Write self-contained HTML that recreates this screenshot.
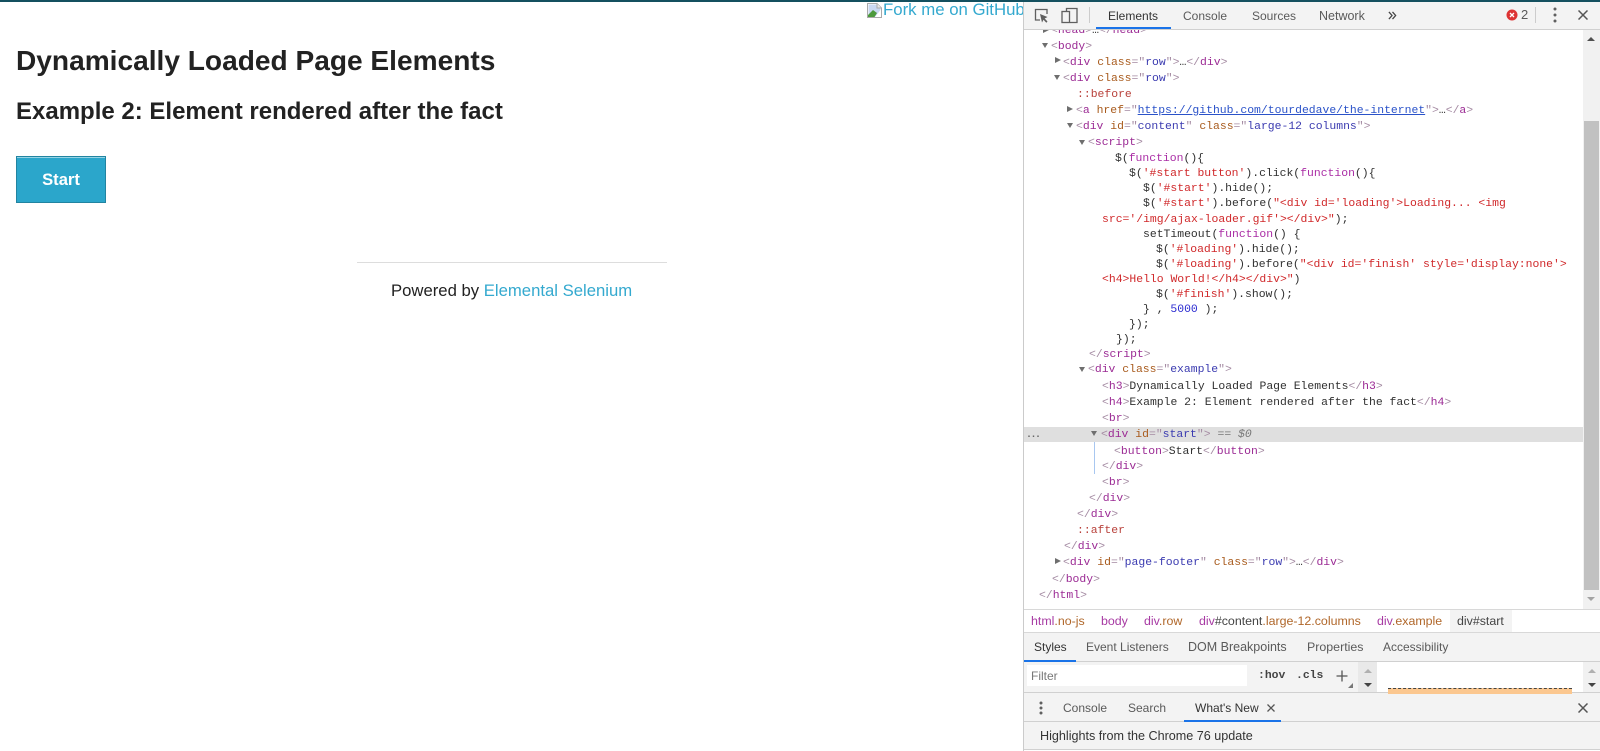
<!DOCTYPE html>
<html lang="en">
<head>
<meta charset="utf-8">
<title>Dynamically Loaded Page Elements</title>
<style>
html,body{margin:0;padding:0;width:1600px;height:751px;overflow:hidden;background:#fff;font-family:"Liberation Sans",sans-serif;}
body{filter:blur(.3px);}
.a{position:absolute;white-space:nowrap;}
#top{position:absolute;left:0;top:0;width:1600px;height:2px;background:#14505f;z-index:9;}
a{color:#34a9cf;text-decoration:none;}
#fork{position:absolute;left:0;top:0;width:1023px;height:30px;overflow:hidden;}
#tree{position:absolute;left:0;top:0;width:1600px;height:609px;font-family:"Liberation Mono",monospace;font-size:11.42px;line-height:16px;color:#303030;overflow:hidden;}
#tree div.l{position:absolute;white-space:pre;}
.t{color:#9b2a94}.b{color:#a58ba3}.n{color:#a85a1c}.v{color:#3a3ab0}.s{color:#d0282a}.k{color:#aa2da5}.p{color:#b8403a}.m{color:#2a2ad0}.g{color:#444}
.d,.r{position:absolute;width:0;height:0;}
.d{border-left:3.5px solid transparent;border-right:3.5px solid transparent;border-top:5.5px solid #6e6e6e;}
.r{border-top:3.5px solid transparent;border-bottom:3.5px solid transparent;border-left:6px solid #6e6e6e;}
.tab{position:absolute;white-space:nowrap;font-size:12px;color:#5a5a5a;line-height:14px;}
.br{position:absolute;white-space:pre;font-size:12.4px;line-height:14px;top:614px;}
.bt{color:#a73aa3}.bc{color:#b0672a}
.gbar{position:absolute;background:#f3f3f3;}
.ln{position:absolute;background:#d0d0d0;}
</style>
</head>
<body>
<div id="top"></div>

<div class="a" style="left:16px;top:44px;font-size:28.1px;line-height:34px;font-weight:bold;color:#222;">Dynamically Loaded Page Elements</div>
<div class="a" style="left:16px;top:98px;font-size:24px;line-height:28px;font-weight:bold;color:#222;">Example 2: Element rendered after the fact</div>
<div class="a" style="left:16px;top:156px;width:90px;height:47px;box-sizing:border-box;background:#2ba6cb;border:1px solid #2284a1;box-shadow:inset 0 1px 0 rgba(255,255,255,.5);color:#fff;font-weight:bold;font-size:16.6px;line-height:45px;text-align:center;">Start</div>

<div class="a" style="left:357px;top:262px;width:310px;height:1px;background:#ddd;"></div>
<div class="a" style="left:391px;top:281px;font-size:16.7px;line-height:20px;color:#222;">Powered by <a>Elemental Selenium</a></div>

<div id="fork">
<svg class="a" style="left:866px;top:2px;" width="17" height="17" viewBox="0 0 17 17"><path d="M1.500 1.500H11L15.500 6V15.500H1.500Z" fill="#fff" stroke="#a9a9a9"/><path d="M11 1.500V6H15.500" fill="#e8e8e8" stroke="#a9a9a9"/><path d="M2.500 2.500H10.500V6.500H14.500V8L9 15H2.500Z" fill="#c9d8f2"/><path d="M2 15V13L7 8L11 11L8.500 15Z" fill="#4c9a3c"/></svg>
<a class="a" style="left:883px;top:0;font-size:16.8px;line-height:19px;">Fork me on GitHub</a>
</div>

<div id="tree">
<div class="l" style="left:1051px;top:23px;"><span class="b">&lt;</span><span class="t">head</span><span class="b">&gt;</span>…<span class="b">&lt;/</span><span class="t">head</span><span class="b">&gt;</span></div>
<span class="r" style="left:1043px;top:27px;"></span>
<span class="d" style="left:1042px;top:43px;"></span>
<div class="l" style="left:1051px;top:39px;"><span class="b">&lt;</span><span class="t">body</span><span class="b">&gt;</span></div>
<span class="r" style="left:1055px;top:57px;"></span>
<div class="l" style="left:1063px;top:55px;"><span class="b">&lt;</span><span class="t">div</span> <span class="n">class</span><span class="b">="</span><span class="v">row</span><span class="b">"&gt;</span>…<span class="b">&lt;/</span><span class="t">div</span><span class="b">&gt;</span></div>
<span class="d" style="left:1054px;top:75px;"></span>
<div class="l" style="left:1063px;top:71px;"><span class="b">&lt;</span><span class="t">div</span> <span class="n">class</span><span class="b">="</span><span class="v">row</span><span class="b">"&gt;</span></div>
<div class="l p" style="left:1077px;top:87px;">::before</div>
<span class="r" style="left:1067px;top:106px;"></span>
<div class="l" style="left:1076px;top:103px;"><span class="b">&lt;</span><span class="t">a</span> <span class="n">href</span><span class="b">="</span><span style="color:#2a52c9;text-decoration:underline;">https://github.com/tourdedave/the-internet</span><span class="b">"&gt;</span>…<span class="b">&lt;/</span><span class="t">a</span><span class="b">&gt;</span></div>
<span class="d" style="left:1067px;top:123px;"></span>
<div class="l" style="left:1076px;top:119px;"><span class="b">&lt;</span><span class="t">div</span> <span class="n">id</span><span class="b">="</span><span class="v">content</span><span class="b">"</span> <span class="n">class</span><span class="b">="</span><span class="v">large-12 columns</span><span class="b">"&gt;</span></div>
<span class="d" style="left:1079px;top:140px;"></span>
<div class="l" style="left:1088px;top:135px;"><span class="b">&lt;</span><span class="t">script</span><span class="b">&gt;</span></div>
<div class="l" style="left:1115px;top:151px;">$(<span class="k">function</span>(){</div>
<div class="l" style="left:1129px;top:166px;">$(<span class="s">'#start button'</span>).click(<span class="k">function</span>(){</div>
<div class="l" style="left:1143px;top:181px;">$(<span class="s">'#start'</span>).hide();</div>
<div class="l" style="left:1143px;top:196px;">$(<span class="s">'#start'</span>).before(<span class="s">"&lt;div id='loading'&gt;Loading... &lt;img</span></div>
<div class="l" style="left:1102px;top:212px;"><span class="s">src='/img/ajax-loader.gif'&gt;&lt;/div&gt;"</span>);</div>
<div class="l" style="left:1143px;top:227px;">setTimeout(<span class="k">function</span>() {</div>
<div class="l" style="left:1156px;top:242px;">$(<span class="s">'#loading'</span>).hide();</div>
<div class="l" style="left:1156px;top:257px;">$(<span class="s">'#loading'</span>).before(<span class="s">"&lt;div id='finish' style='display:none'&gt;</span></div>
<div class="l" style="left:1102px;top:272px;"><span class="s">&lt;h4&gt;Hello World!&lt;/h4&gt;&lt;/div&gt;"</span>)</div>
<div class="l" style="left:1156px;top:287px;">$(<span class="s">'#finish'</span>).show();</div>
<div class="l" style="left:1143px;top:302px;">} , <span class="m">5000</span> );</div>
<div class="l" style="left:1129px;top:317px;">});</div>
<div class="l" style="left:1116px;top:332px;">});</div>
<div class="l" style="left:1089px;top:347px;"><span class="b">&lt;/</span><span class="t">script</span><span class="b">&gt;</span></div>
<span class="d" style="left:1079px;top:367px;"></span>
<div class="l" style="left:1088px;top:362px;"><span class="b">&lt;</span><span class="t">div</span> <span class="n">class</span><span class="b">="</span><span class="v">example</span><span class="b">"&gt;</span></div>
<div class="l" style="left:1102px;top:379px;"><span class="b">&lt;</span><span class="t">h3</span><span class="b">&gt;</span>Dynamically Loaded Page Elements<span class="b">&lt;/</span><span class="t">h3</span><span class="b">&gt;</span></div>
<div class="l" style="left:1102px;top:395px;"><span class="b">&lt;</span><span class="t">h4</span><span class="b">&gt;</span>Example 2: Element rendered after the fact<span class="b">&lt;/</span><span class="t">h4</span><span class="b">&gt;</span></div>
<div class="l" style="left:1102px;top:411px;"><span class="b">&lt;</span><span class="t">br</span><span class="b">&gt;</span></div>
<div class="a" style="left:1024px;top:427px;width:559px;height:15px;background:#dfdfdf;"></div>
<div class="l" style="left:1026px;top:428px;color:#666;font-weight:bold;font-size:10px;letter-spacing:-1.5px;">...</div>
<span class="d" style="left:1091px;top:431px;"></span>
<div class="l" style="left:1101px;top:427px;"><span class="b">&lt;</span><span class="t">div</span> <span class="n">id</span><span class="b">="</span><span class="v">start</span><span class="b">"&gt;</span> <span style="color:#777;">== <i>$0</i></span></div>
<div class="a" style="left:1094px;top:442px;width:1px;height:32px;background:#a8c7f0;"></div>
<div class="l" style="left:1114px;top:444px;"><span class="b">&lt;</span><span class="t">button</span><span class="b">&gt;</span>Start<span class="b">&lt;/</span><span class="t">button</span><span class="b">&gt;</span></div>
<div class="l" style="left:1102px;top:459px;"><span class="b">&lt;/</span><span class="t">div</span><span class="b">&gt;</span></div>
<div class="l" style="left:1102px;top:475px;"><span class="b">&lt;</span><span class="t">br</span><span class="b">&gt;</span></div>
<div class="l" style="left:1089px;top:491px;"><span class="b">&lt;/</span><span class="t">div</span><span class="b">&gt;</span></div>
<div class="l" style="left:1077px;top:507px;"><span class="b">&lt;/</span><span class="t">div</span><span class="b">&gt;</span></div>
<div class="l p" style="left:1077px;top:523px;">::after</div>
<div class="l" style="left:1064px;top:539px;"><span class="b">&lt;/</span><span class="t">div</span><span class="b">&gt;</span></div>
<span class="r" style="left:1055px;top:558px;"></span>
<div class="l" style="left:1063px;top:555px;"><span class="b">&lt;</span><span class="t">div</span> <span class="n">id</span><span class="b">="</span><span class="v">page-footer</span><span class="b">"</span> <span class="n">class</span><span class="b">="</span><span class="v">row</span><span class="b">"&gt;</span>…<span class="b">&lt;/</span><span class="t">div</span><span class="b">&gt;</span></div>
<div class="l" style="left:1052px;top:572px;"><span class="b">&lt;/</span><span class="t">body</span><span class="b">&gt;</span></div>
<div class="l" style="left:1039px;top:588px;"><span class="b">&lt;/</span><span class="t">html</span><span class="b">&gt;</span></div>
</div>

<!-- tree scrollbar -->
<div class="a" style="left:1583px;top:30px;width:17px;height:579px;background:#f1f1f1;"></div>
<div class="a" style="left:1584px;top:121px;width:15px;height:469px;background:#c1c1c1;"></div>
<div class="a" style="left:1587px;top:37px;width:0;height:0;border-left:4px solid transparent;border-right:4px solid transparent;border-bottom:4px solid #505050;"></div>
<div class="a" style="left:1587px;top:597px;width:0;height:0;border-left:4px solid transparent;border-right:4px solid transparent;border-top:4px solid #a3a3a3;"></div>

<!-- toolbar -->
<div class="gbar" style="left:1024px;top:2px;width:576px;height:27px;"></div>
<div class="ln" style="left:1024px;top:29px;width:576px;height:1px;"></div>
<div class="a" style="left:1023px;top:2px;width:1px;height:749px;background:#cbcbcb;"></div>
<svg class="a" style="left:1032px;top:6px;" width="18" height="18" viewBox="0 0 18 18"><path d="M8 14H3.500V3.500H15V8" fill="none" stroke="#5f5f5f" stroke-width="1.300"/><path d="M8 8L15.500 11L12.700 12.500L15.500 15.500L14.300 16.700L11.500 13.700L10 16.500Z" fill="#5f5f5f"/></svg>
<svg class="a" style="left:1060px;top:6px;" width="19" height="18" viewBox="0 0 19 18"><path d="M6.500 5V2.500H17V16.500H10" fill="none" stroke="#5f5f5f" stroke-width="1.300"/><rect x="2" y="5.500" width="7.500" height="11" fill="none" stroke="#5f5f5f" stroke-width="1.300"/></svg>
<div class="a" style="left:1089px;top:7px;width:1px;height:16px;background:#ccc;"></div>
<div class="tab" style="left:1108px;top:9px;color:#333;">Elements</div>
<div class="a" style="left:1096px;top:27px;width:75px;height:2px;background:#1a73e8;"></div>
<div class="tab" style="left:1183px;top:9px;">Console</div>
<div class="tab" style="left:1252px;top:9px;">Sources</div>
<div class="tab" style="left:1319px;top:9px;font-size:12.5px;">Network</div>
<svg class="a" style="left:1388px;top:11px;" width="9" height="9" viewBox="0 0 10 10"><path d="M1 1L4.500 5L1 9M5 1L8.500 5L5 9" fill="none" stroke="#444" stroke-width="1.400"/></svg>
<svg class="a" style="left:1506px;top:9px;" width="12" height="12" viewBox="0 0 12 12"><circle cx="6" cy="6" r="5.500" fill="#dd3333"/><path d="M4 4L8 8M8 4L4 8" stroke="#fff" stroke-width="1.300"/></svg>
<div class="tab" style="left:1521px;top:8px;font-size:13px;">2</div>
<div class="a" style="left:1535px;top:7px;width:1px;height:16px;background:#ccc;"></div>
<svg class="a" style="left:1553px;top:7px;" width="4" height="16" viewBox="0 0 4 16"><circle cx="2" cy="2" r="1.500" fill="#5f5f5f"/><circle cx="2" cy="8" r="1.500" fill="#5f5f5f"/><circle cx="2" cy="14" r="1.500" fill="#5f5f5f"/></svg>
<svg class="a" style="left:1578px;top:10px;" width="10" height="10" viewBox="0 0 10 10"><path d="M0.500 0.500L9.500 9.500M9.500 0.500L0.500 9.500" stroke="#555" stroke-width="1.500"/></svg>

<!-- breadcrumbs -->
<div class="a" style="left:1024px;top:609px;width:576px;height:24px;background:#fff;border-top:1px solid #d8d8d8;border-bottom:1px solid #d8d8d8;box-sizing:border-box;"></div>
<div class="a" style="left:1450px;top:610px;width:62px;height:22px;background:#f3f3f3;"></div>
<div class="br" style="left:1031px;"><span class="bt">html</span><span class="bc">.no-js</span></div>
<div class="br" style="left:1101px;"><span class="bt">body</span></div>
<div class="br" style="left:1144px;"><span class="bt">div</span><span class="bc">.row</span></div>
<div class="br" style="left:1199px;"><span class="bt">div</span><span style="color:#444;">#content</span><span class="bc">.large-12.columns</span></div>
<div class="br" style="left:1377px;"><span class="bt">div</span><span class="bc">.example</span></div>
<div class="br" style="left:1457px;color:#444;">div#start</div>

<!-- styles tabs -->
<div class="gbar" style="left:1024px;top:633px;width:576px;height:28px;"></div>
<div class="ln" style="left:1024px;top:661px;width:576px;height:1px;"></div>
<div class="tab" style="left:1034px;top:640px;color:#333;">Styles</div>
<div class="a" style="left:1024px;top:660px;width:52px;height:2px;background:#1a73e8;"></div>
<div class="tab" style="left:1086px;top:640px;">Event Listeners</div>
<div class="tab" style="left:1188px;top:640px;font-size:12.5px;">DOM Breakpoints</div>
<div class="tab" style="left:1307px;top:640px;font-size:12.4px;">Properties</div>
<div class="tab" style="left:1383px;top:640px;">Accessibility</div>

<!-- filter row -->
<div class="gbar" style="left:1024px;top:662px;width:334px;height:31px;"></div>
<div class="a" style="left:1027px;top:665px;width:220px;height:21px;background:#fff;"></div>
<div class="tab" style="left:1031px;top:669px;color:#777;">Filter</div>
<div class="a" style="left:1258px;top:669px;font:bold 11.400px/14px 'Liberation Mono',monospace;color:#444;">:hov</div>
<div class="a" style="left:1296px;top:669px;font:bold 11.400px/14px 'Liberation Mono',monospace;color:#444;">.cls</div>
<svg class="a" style="left:1336px;top:670px;" width="12" height="12" viewBox="0 0 12 12"><path d="M6 0.500V11.500M0.500 6H11.500" stroke="#555" stroke-width="1.300"/></svg>
<div class="a" style="left:1348px;top:683px;width:0;height:0;border-left:5px solid transparent;border-bottom:5px solid #777;"></div>
<div class="a" style="left:1358px;top:662px;width:19px;height:31px;background:#e9e9e9;"></div>
<div class="a" style="left:1364px;top:669px;width:0;height:0;border-left:4px solid transparent;border-right:4px solid transparent;border-bottom:4px solid #b0b0b0;"></div>
<div class="a" style="left:1364px;top:683px;width:0;height:0;border-left:4px solid transparent;border-right:4px solid transparent;border-top:4px solid #444;"></div>
<div class="a" style="left:1583px;top:662px;width:17px;height:31px;background:#f1f1f1;"></div>
<div class="a" style="left:1588px;top:669px;width:0;height:0;border-left:4px solid transparent;border-right:4px solid transparent;border-bottom:4px solid #b0b0b0;"></div>
<div class="a" style="left:1588px;top:683px;width:0;height:0;border-left:4px solid transparent;border-right:4px solid transparent;border-top:4px solid #444;"></div>

<!-- drawer -->
<div class="gbar" style="left:1024px;top:693px;width:576px;height:56px;"></div>
<div class="ln" style="left:1024px;top:692px;width:576px;height:1px;"></div>
<div class="a" style="left:1388px;top:688px;width:184px;height:6px;background:#fbc78f;border-top:1px dashed #444;box-sizing:border-box;"></div>
<div class="ln" style="left:1024px;top:721px;width:576px;height:1px;"></div>
<div class="ln" style="left:1024px;top:749px;width:576px;height:1px;"></div>
<svg class="a" style="left:1039px;top:701px;" width="4" height="14" viewBox="0 0 4 14"><circle cx="2" cy="2" r="1.500" fill="#5f5f5f"/><circle cx="2" cy="7" r="1.500" fill="#5f5f5f"/><circle cx="2" cy="12" r="1.500" fill="#5f5f5f"/></svg>
<div class="tab" style="left:1063px;top:701px;">Console</div>
<div class="tab" style="left:1128px;top:701px;">Search</div>
<div class="tab" style="left:1195px;top:701px;color:#333;">What's New</div>
<svg class="a" style="left:1267px;top:704px;" width="8" height="8" viewBox="0 0 8 8"><path d="M0.500 0.500L7.500 7.500M7.500 0.500L0.500 7.500" stroke="#555" stroke-width="1.300"/></svg>
<div class="a" style="left:1184px;top:720px;width:97px;height:2px;background:#1a73e8;"></div>
<svg class="a" style="left:1578px;top:703px;" width="10" height="10" viewBox="0 0 10 10"><path d="M0.500 0.500L9.500 9.500M9.500 0.500L0.500 9.500" stroke="#555" stroke-width="1.500"/></svg>
<div class="tab" style="left:1040px;top:729px;color:#333;font-size:12.6px;">Highlights from the Chrome 76 update</div>
</body>
</html>
